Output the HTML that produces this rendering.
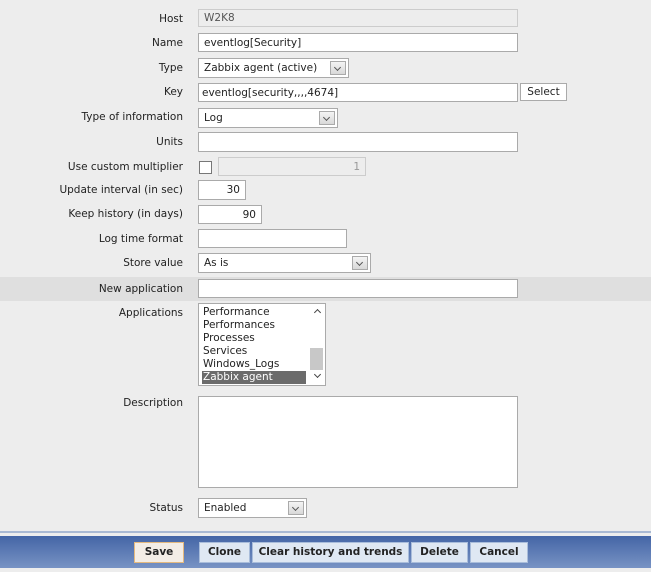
<!DOCTYPE html>
<html><head><meta charset="utf-8"><style>
*{box-sizing:border-box;margin:0;padding:0}
body{width:651px;height:572px;background:#ededed;position:relative;overflow:hidden;font-family:"DejaVu Sans","Liberation Sans",sans-serif;font-size:10.5px;color:#222}
.l{position:absolute;right:468px;text-align:right;white-space:nowrap;top:0}
.i{position:absolute;background:#fff;border:1px solid #aaa;padding:0 5px;white-space:nowrap;display:flex;align-items:center}
.ro{background:#ededed;border-color:#ccc;color:#555}
.r{justify-content:flex-end}
.dd{position:absolute;top:2px;right:2px;width:16px;height:14px;border:1px solid #aaa;background:linear-gradient(#f4f4f4,#d8d8d8)}
.dd:after{content:"";position:absolute;left:4px;top:3px;width:4px;height:4px;border-right:1.5px solid #555;border-bottom:1.5px solid #555;transform:rotate(45deg)}
.btn{position:absolute;top:542px;height:21px;background:#dfe8f3;border:1px solid #a9bddb;font-weight:bold;text-align:center;line-height:19px;color:#222}
</style></head><body>
<div class="l" style="top:13px">Host</div><div class="i ro" style="left:198px;top:9px;width:320px;height:18px">W2K8</div>
<div class="l" style="top:37px">Name</div><div class="i" style="left:198px;top:33px;width:320px;height:19px">eventlog[Security]</div>
<div class="l" style="top:62px">Type</div><div class="i" style="left:198px;top:58px;width:151px;height:20px">Zabbix agent (active)<span class="dd"></span></div>
<div class="l" style="top:86px">Key</div><div class="i" style="left:198px;top:83px;width:320px;height:19px;padding-left:3px">eventlog[security,,,,4674]</div>
<div class="i" style="left:520px;top:83px;width:47px;height:18px;justify-content:center;padding:0">Select</div>
<div class="l" style="top:111px">Type of information</div><div class="i" style="left:198px;top:108px;width:140px;height:20px">Log<span class="dd"></span></div>
<div class="l" style="top:136px">Units</div><div class="i" style="left:198px;top:132px;width:320px;height:20px"></div>
<div class="l" style="top:161px">Use custom multiplier</div><div class="i" style="left:199px;top:161px;width:13px;height:13px;border-color:#777"></div>
<div class="i ro r" style="left:218px;top:157px;width:148px;height:19px;color:#999">1</div>
<div class="l" style="top:184px">Update interval (in sec)</div><div class="i r" style="left:198px;top:180px;width:48px;height:20px">30</div>
<div class="l" style="top:208px">Keep history (in days)</div><div class="i r" style="left:198px;top:205px;width:64px;height:19px">90</div>
<div class="l" style="top:233px">Log time format</div><div class="i" style="left:198px;top:229px;width:149px;height:19px"></div>
<div class="l" style="top:257px">Store value</div><div class="i" style="left:198px;top:253px;width:173px;height:20px">As is<span class="dd"></span></div>
<div style="position:absolute;left:0;top:277px;width:651px;height:24px;background:#dfdfdf"></div>
<div class="l" style="top:283px">New application</div><div class="i" style="left:198px;top:279px;width:320px;height:19px"></div>
<div class="l" style="top:307px">Applications</div>
<div class="i" style="left:198px;top:303px;width:128px;height:83px;padding:2px 0 0 4px;line-height:13px;display:block">
<div>Performance</div><div>Performances</div><div>Processes</div><div>Services</div><div>Windows_Logs</div>
<div style="background:#6b6b6b;color:#fff;width:104px;margin-left:-1px;padding-left:1px">Zabbix agent</div>
<div style="position:absolute;right:1px;top:1px;width:15px;height:79px;background:#fff"></div>
<div style="position:absolute;right:2px;top:44px;width:13px;height:22px;background:#c8c8c8"></div>
<div style="position:absolute;right:5px;top:6px;width:5px;height:5px;border-left:1.5px solid #444;border-top:1.5px solid #444;transform:rotate(45deg)"></div>
<div style="position:absolute;right:5px;top:68px;width:5px;height:5px;border-right:1.5px solid #444;border-bottom:1.5px solid #444;transform:rotate(45deg)"></div>
</div>
<div class="l" style="top:397px">Description</div><div class="i" style="left:198px;top:396px;width:320px;height:92px"></div>
<div class="l" style="top:502px">Status</div><div class="i" style="left:198px;top:498px;width:109px;height:20px">Enabled<span class="dd"></span></div>
<div style="position:absolute;left:0;top:531px;width:651px;height:2px;background:#a9b9d3"></div>
<div style="position:absolute;left:0;top:536px;width:651px;height:32px;background:linear-gradient(#4465a6,#7893c4)"></div>
<div class="btn" style="left:134px;width:50px;background:#f3ede6;border-color:#e4b97f">Save</div>
<div class="btn" style="left:199px;width:51px">Clone</div>
<div class="btn" style="left:252px;width:157px">Clear history and trends</div>
<div class="btn" style="left:411px;width:57px">Delete</div>
<div class="btn" style="left:470px;width:58px">Cancel</div>
</body></html>
